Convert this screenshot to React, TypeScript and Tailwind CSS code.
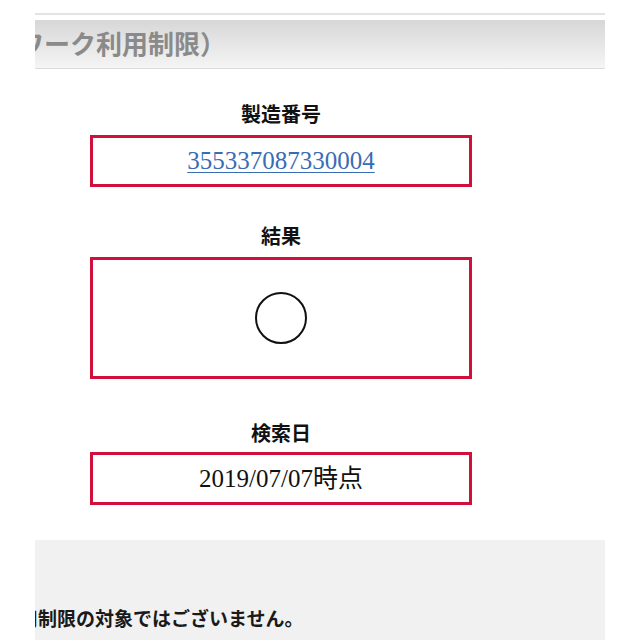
import React from "react";

const serif = { fontFamily: '"Liberation Serif", "Noto Sans CJK JP", serif' };
const sans = { fontFamily: '"Liberation Sans", "Noto Sans CJK JP", sans-serif' };

function Label({ text, top }: { text: string; top: string }) {
  return (
    <div className={`${top} text-center text-[20px] leading-[28px] font-bold text-[#111]`} style={serif}>
      {text}
    </div>
  );
}

export default function App() {
  return (
    <div className="w-[640px] h-[640px] bg-white overflow-hidden" style={sans}>
      <div className="pt-[13px] px-[35px]">
        <div className="h-[2px] bg-[#e3e3e3]" />
        <div className="mt-[5px] h-[49px] border-b border-[#dcdcdc] bg-gradient-to-b from-[#d7d7d7] to-[#f5f5f5] overflow-hidden flex items-center">
          <span className="-ml-[17px] mt-[2px] text-[26px] font-bold text-[#8a8a8a] whitespace-nowrap">
            ワーク利用制限）
          </span>
        </div>

        <div className="ml-[55px] w-[382px]">
          <Label text="製造番号" top="mt-[32px]" />
          <div className="mt-[6px] h-[52px] border-[3px] border-[#d0103a] flex items-center justify-center">
            <a href="#" className="text-[25px] text-[#3a6cb5] underline underline-offset-[3px] decoration-1" style={serif}>
              355337087330004
            </a>
          </div>

          <Label text="結果" top="mt-[36px]" />
          <div className="mt-[6px] h-[122px] border-[3px] border-[#d0103a] flex items-center justify-center">
            <svg width="54" height="54" viewBox="0 0 54 54">
              <circle cx="27" cy="27" r="25" fill="none" stroke="#111" strokeWidth="2" />
            </svg>
          </div>

          <Label text="検索日" top="mt-[41px]" />
          <div className="mt-[4px] h-[53px] border-[3px] border-[#d0103a] flex items-center justify-center">
            <span className="text-[25px] text-[#111]" style={serif}>
              2019/07/07時点
            </span>
          </div>
        </div>

        <div className="mt-[35px] h-[110px] bg-[#f1f1f1] overflow-hidden pt-[66px]">
          <span className="-ml-[16px] inline-block text-[19px] font-bold text-[#1a1a1a] whitespace-nowrap">
            用制限の対象ではございません。
          </span>
        </div>
      </div>
    </div>
  );
}
